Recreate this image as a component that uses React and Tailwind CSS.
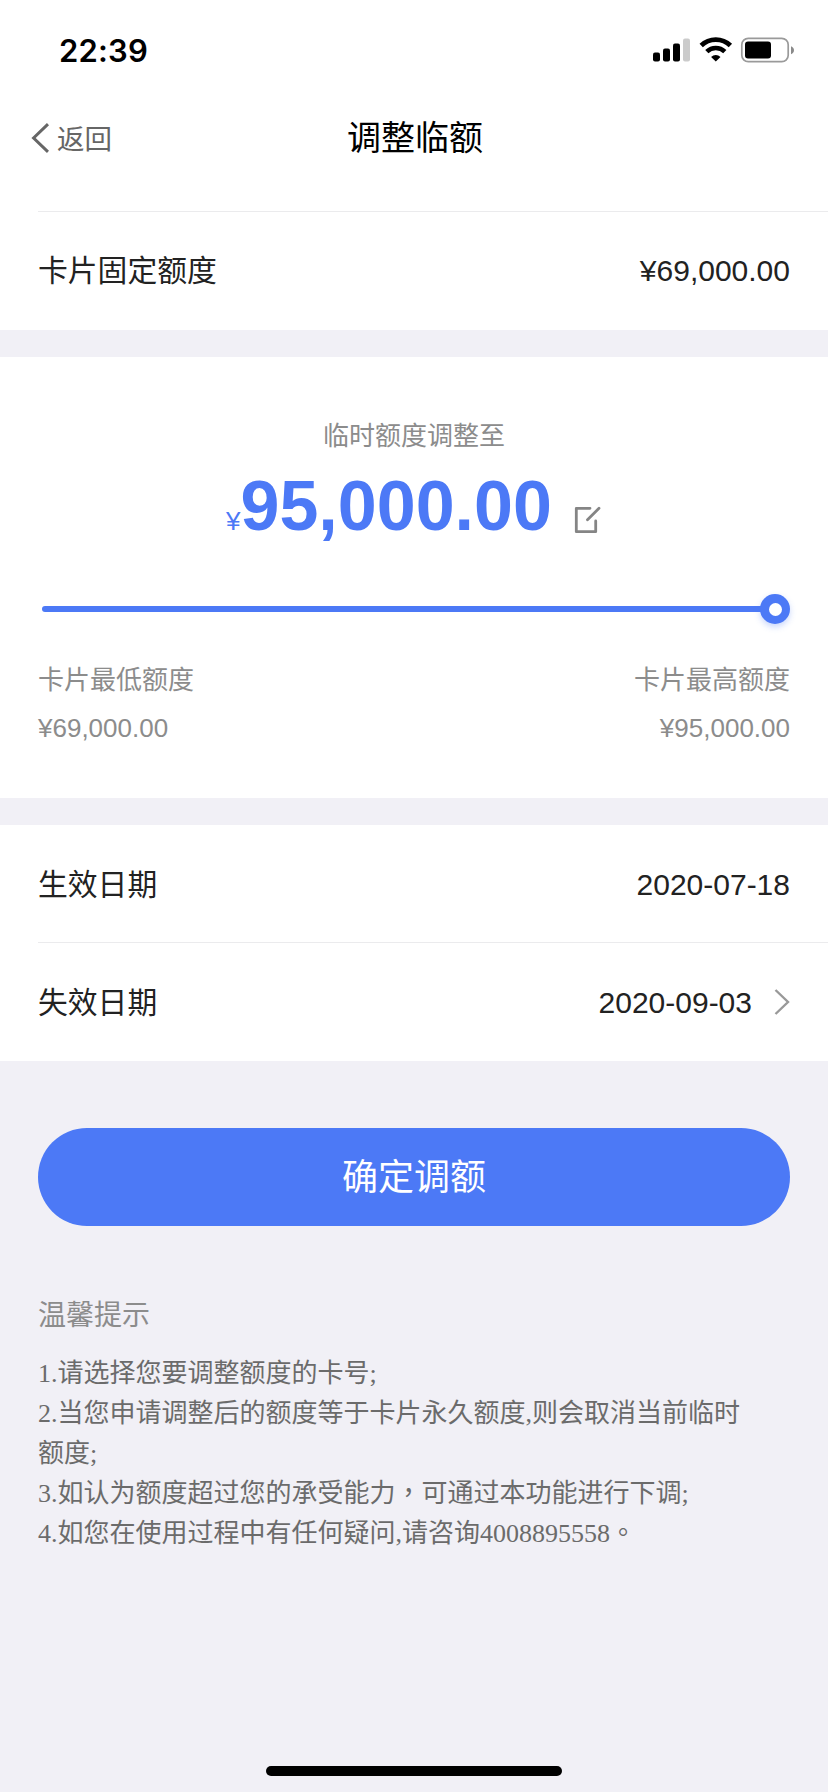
const tips = [
    "1.请选择您要调整额度的卡号;",
    "2.当您申请调整后的额度等于卡片永久额度,则会取消当前临时额度;",
    "3.如认为额度超过您的承受能力，可通过本功能进行下调;",
    "4.如您在使用过程中有任何疑问,请咨询4008895558。",
];

const StatusBar = () => (
    <div className="h-[98px] pl-[59px] pr-[33px] pt-0.5 flex items-center justify-between">
        <span className="font-['Inter'] font-semibold text-[31px] leading-none tracking-[0.2px]">
            22:39
        </span>
        <svg width="142" height="26" viewBox="0 0 142 26" fill="none">
            {/* Signal */}
            <rect x="0" y="15.5" width="7" height="9" rx="2" fill="#000" />
            <rect x="10" y="11.5" width="7" height="13" rx="2" fill="#000" />
            <rect x="20" y="6.5" width="7" height="18" rx="2" fill="#000" />
            <rect x="30" y="1.5" width="7" height="23" rx="2" fill="#cbcbcb" />
            {/* Wifi */}
            <path d="M48.2 8.6a21 21 0 0 1 29.2 0" stroke="#000" strokeWidth="4.8" />
            <path d="M53.8 14.6a13 13 0 0 1 18 0" stroke="#000" strokeWidth="4.6" />
            <path d="M62.8 24.6l-4.7-4.7a6.8 6.8 0 0 1 9.4 0z" fill="#000" />
            {/* Battery */}
            <rect x="88.8" y="1.3" width="46.4" height="23.4" rx="6.5" stroke="#9a9a9a" strokeWidth="1.7" />
            <rect x="92" y="4.5" width="26" height="17" rx="3" fill="#000" />
            <path d="M138 9.2c4 1.5 4 6.5 0 8z" fill="#8a8a8a" />
        </svg>
    </div>
);

const Header = () => (
    <header className="h-[113px] pl-[31px] flex items-start">
        <button className="w-[316px] h-20 flex items-center text-[27.5px] text-[#666]">
            <svg className="mr-2" width="18" height="30" viewBox="0 0 18 30" fill="none">
                <path d="M17 1.2L2.6 15L17 28.8" stroke="#666" strokeWidth="3" />
            </svg>
            <span className="pt-[3px]">返回</span>
        </button>
        <h1 className="h-20 flex items-center text-[34px] text-black">调整临额</h1>
    </header>
);

const Row = ({ label, value, arrow }) => (
    <div className="h-[118px] ml-[38px] pr-[38px] flex items-center justify-between text-[30px] text-[#222]">
        <span className="pt-[3px] text-[29.8px]">{label}</span>
        <div className="flex items-center">
            <span>{value}</span>
            {arrow && (
                <svg className="ml-[22px]" width="16" height="26" viewBox="0 0 16 26" fill="none">
                    <path d="M1.5 1l12.5 12L1.5 25" stroke="#999" strokeWidth="2.4" />
                </svg>
            )}
        </div>
    </div>
);

const Divider = () => <div className="h-px -mb-px ml-[38px] bg-[#ebebed]" />;

const Slider = () => (
    <div className="mt-[44px] h-[30px] pl-1 flex items-center">
        <div className="flex-1 h-1.5 -mr-1 rounded-l-sm bg-[#4c79f6]" />
        <div className="w-[30px] h-[30px] rounded-full bg-[#4c79f6] flex items-center justify-center shadow-[0_3px_6px_rgba(76,121,246,0.3)]">
            <div className="w-[13px] h-[13px] rounded-full bg-white" />
        </div>
    </div>
);

const App = () => {
    return (
        <div
            lang="zh-CN"
            className="w-[828px] h-[1792px] flex flex-col overflow-hidden bg-[#f1f0f6] font-['Liberation_Sans','Noto_Sans_CJK_SC',sans-serif]"
        >
            <div className="bg-white pb-px">
                <StatusBar />
                <Header />
                <Divider />
                <Row label="卡片固定额度" value="¥69,000.00" />
            </div>

            {/* Temporary limit */}
            <section className="mt-[27px] h-[441px] px-[38px] pt-[59px] bg-white text-[26px] text-[#8c8c8c]">
                <p className="h-10 leading-10 text-center">临时额度调整至</p>
                <div className="h-[95px] pt-[3px] pl-[188px] flex items-baseline text-[#4c79f6] leading-[95px]">
                    <span>¥</span>
                    <span className="text-[70px] font-bold">95,000.00</span>
                    <svg className="ml-[22px] translate-y-1" width="27" height="28" viewBox="0 0 27 28" fill="none">
                        <path
                            d="M16 2.3H2.3V25.7H21.7V15"
                            stroke="#858585"
                            strokeWidth="2.8"
                            strokeLinejoin="round"
                            strokeLinecap="round"
                        />
                        <path d="M13.5 13.7L25 2.3" stroke="#858585" strokeWidth="2.8" strokeLinecap="round" />
                    </svg>
                </div>
                <div className="-mt-px">
                    <Slider />
                </div>
                <div className="mt-8 flex justify-between leading-[48px]">
                    <div>
                        <p>卡片最低额度</p>
                        <p>¥69,000.00</p>
                    </div>
                    <div className="text-right">
                        <p>卡片最高额度</p>
                        <p>¥95,000.00</p>
                    </div>
                </div>
            </section>

            {/* Dates */}
            <section className="mt-[27px] bg-white">
                <Row label="生效日期" value="2020-07-18" />
                <div className="-mt-px">
                    <Divider />
                </div>
                <div className="pt-px">
                    <Row label="失效日期" value="2020-09-03" arrow />
                </div>
            </section>

            <button className="mt-[67px] mx-[38px] h-[98px] pt-0.5 shrink-0 rounded-full bg-[#4c79f6] text-white text-[36px]">
                确定调额
            </button>

            {/* Tips */}
            <section className="mt-[69px] px-[38px] flex-1">
                <h2 className="h-[42px] leading-[42px] text-[28px] text-[#8c8c8c]">温馨提示</h2>
                <div className="mt-[17px] w-[720px] text-[26px] leading-[40px] text-[#6b6b6b] font-['Liberation_Serif','Noto_Sans_CJK_SC',serif]">
                    {tips.map((tip) => (
                        <p key={tip}>
                            {tip.split(/([，。])/).map((part, i) =>
                                i % 2 ? (
                                    <span key={i} lang="zh-TW" className="font-['Noto_Sans_CJK_TC',sans-serif] leading-none">
                                        {part}
                                    </span>
                                ) : (
                                    part
                                )
                            )}
                        </p>
                    ))}
                </div>
            </section>

            {/* Home indicator */}
            <div className="mx-auto mb-4 w-[296px] h-2.5 shrink-0 rounded-full bg-black" />
        </div>
    );
};

export default App;
